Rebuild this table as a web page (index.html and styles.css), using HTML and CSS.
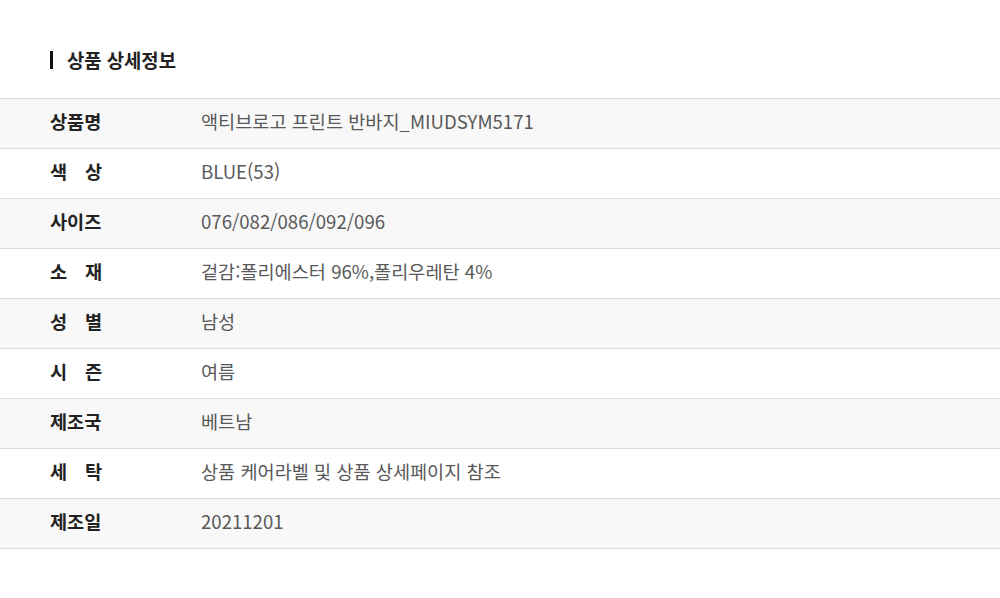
FILE: index.html
```html
<!DOCTYPE html>
<html lang="ko">
  <head>
    <meta charset="UTF-8" />
    <meta name="viewport" content="width=device-width, initial-scale=1.0" />
    <title>상품 상세정보</title>
    <link rel="stylesheet" href="styles.css">
  </head>
  <body>
    <h2 class="section-title">상품 상세정보</h2>
    <table class="detail-table">
      <tbody>
        <tr>
          <th><span class="label">상품명</span></th>
          <td>액티브로고 프린트 반바지_MIUDSYM5171</td>
        </tr>
        <tr>
          <th><span class="label">색 상</span></th>
          <td>BLUE(53)</td>
        </tr>
        <tr>
          <th><span class="label">사이즈</span></th>
          <td>076/082/086/092/096</td>
        </tr>
        <tr>
          <th><span class="label">소 재</span></th>
          <td>겉감:폴리에스터 96%,폴리우레탄 4%</td>
        </tr>
        <tr>
          <th><span class="label">성 별</span></th>
          <td>남성</td>
        </tr>
        <tr>
          <th><span class="label">시 즌</span></th>
          <td>여름</td>
        </tr>
        <tr>
          <th><span class="label">제조국</span></th>
          <td>베트남</td>
        </tr>
        <tr>
          <th><span class="label">세 탁</span></th>
          <td>상품 케어라벨 및 상품 상세페이지 참조</td>
        </tr>
        <tr>
          <th><span class="label">제조일</span></th>
          <td>20211201</td>
        </tr>
      </tbody>
    </table>
  </body>
</html>
```

FILE: styles.css
```css
body {
  font-family: "Noto Sans CJK KR", "Noto Sans", sans-serif;
  margin: 0;
  padding-top: 51px;
  color: #222;
}

.section-title {
  margin: 0 0 29px 50px;
  padding-left: 14px;
  border-left: 3px solid #111;
  font-size: 18.8px;
  font-weight: 700;
  line-height: 18px;
  height: 18px;
}

.detail-table {
  width: 100%;
  border-collapse: collapse;
  border-top: 1px solid #dcdcdc;
}

.detail-table th,
.detail-table td {
  height: 43px;
  padding: 0 0 6px;
  border-bottom: 1px solid #dcdcdc;
  font-size: 18.6px;
  line-height: 26px;
  text-align: left;
  vertical-align: middle;
}

.detail-table tr:nth-child(odd) {
  background-color: #f8f8f8;
}

.detail-table th {
  width: 201px;
  padding-left: 50px;
  box-sizing: border-box;
  font-weight: 700;
  color: #222;
}

.label {
  display: inline-block;
  width: 52px;
  text-align: justify;
  text-align-last: justify;
}

.detail-table td {
  color: #595959;
  font-weight: 400;
}
```
